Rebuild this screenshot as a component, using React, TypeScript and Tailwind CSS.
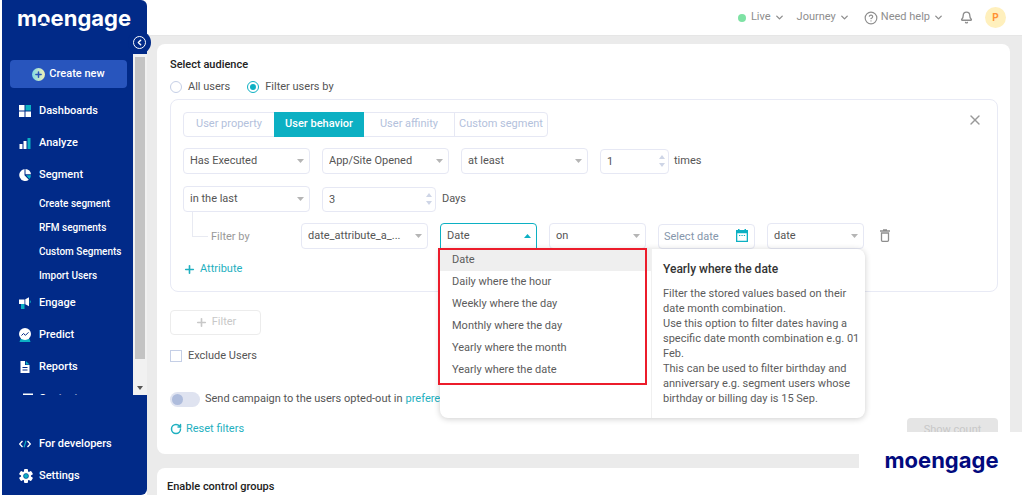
import { Bell, ChevronDown, ChevronLeft, CircleHelp, Plus, RotateCw, X } from 'lucide-react';
import clsx from 'clsx';
import type { ReactNode } from 'react';

const subItems = ['Create segment', 'RFM segments', 'Custom Segments', 'Import Users'];

const dateOptions = [
  'Date',
  'Daily where the hour',
  'Weekly where the day',
  'Monthly where the day',
  'Yearly where the month',
  'Yearly where the date',
];

const tabs = ['User property', 'User behavior', 'User affinity', 'Custom segment'];

function Logo({ className, gapClass }: { className: string; gapClass: string }) {
  return (
    <span className={clsx('flex font-[Inter,sans-serif] text-[22px] leading-7 font-bold', className)}>
      <span>m</span>
      <span className="relative">
        o
        <svg className={clsx('absolute inset-0 size-full', gapClass)} viewBox="0 0 14 28" aria-hidden="true">
          <path d="M.5 20.500l4.500-2M13.500 20.500l-4.500-2" stroke="currentColor" strokeWidth="1.800" />
        </svg>
      </span>
      <span>engage</span>
    </span>
  );
}

function DashboardIcon() {
  return (
    <svg viewBox="0 0 12 12" className="size-3" aria-hidden="true">
      <path d="M0 0h5.500v5.500H0zM0 6.500h5.500V12H0zM6.500 6.500H12V12H6.500z" fill="#fff" />
      <path d="M6.500 0H12v5.500H6.500z" fill="#0cb0c3" />
    </svg>
  );
}

function AnalyzeIcon() {
  return (
    <svg viewBox="0 0 12 12" className="size-3" aria-hidden="true">
      <path d="M.5 7h3v5h-3zM4.500 4h3v8h-3z" fill="#fff" />
      <path d="M8.500 1h3v11h-3z" fill="#0cb0c3" />
    </svg>
  );
}

function SegmentIcon() {
  return (
    <svg viewBox="0 0 12 12" className="size-3" aria-hidden="true">
      <path d="M5.500 0v6.300l4.300 4.500A6 6 0 1 1 5.500 0z" fill="#fff" />
      <path d="M6.500 0A5.600 5.600 0 0 1 12 5.300H6.500z" fill="#fff" />
      <path d="M7 6.300h5a5.500 5.500 0 0 1-1.600 3.600z" fill="#0cb0c3" />
    </svg>
  );
}

function EngageIcon() {
  return (
    <svg viewBox="0 0 12 12" className="size-3" aria-hidden="true">
      <path d="M0 2.500h5.500v4.500H0z" fill="#fff" />
      <path d="M6.300 2.300L10 .3v9L6.300 7.200z" fill="#fff" />
      <path d="M2 7h3.500v5H2zM10.700 3a2 2 0 0 1 0 3.600z" fill="#0cb0c3" />
    </svg>
  );
}

function PredictIcon() {
  return (
    <svg viewBox="0 0 12 14" className="h-3.5 w-3" aria-hidden="true">
      <path d="M1.500 11h9l1 3H.5z" fill="#0cb0c3" />
      <circle cx="6" cy="6" r="6" fill="#fff" />
      <path d="M2.500 7.500l2-2 2 1.800 3-3" fill="none" stroke="#012a88" strokeWidth="1" />
    </svg>
  );
}

function ReportsIcon() {
  return (
    <svg viewBox="0 0 12 12" className="size-3" aria-hidden="true">
      <path d="M1.500 0H6v4h4.500v8h-9z" fill="#fff" />
      <path d="M6.800 0l3.700 3.400H6.800z" fill="#0cb0c3" />
      <path d="M3.500 6.500h5M3.500 9h5" stroke="#012a88" strokeWidth="1" />
    </svg>
  );
}

function ContentIcon() {
  return (
    <svg viewBox="0 0 14 12" className="h-3 w-3.5" aria-hidden="true">
      <path d="M4 .5h10v9H4z" fill="#fff" />
      <path d="M6 2.500h6v4H6z" fill="#0cb0c3" />
      <path d="M1 3h1.500v9H1z" fill="#fff" />
    </svg>
  );
}

function CodeIcon() {
  return (
    <svg viewBox="0 0 12 12" className="size-3" fill="none" aria-hidden="true">
      <path d="M3.500 3L.7 6l2.800 3M8.500 3l2.800 3-2.800 3" stroke="#fff" strokeWidth="1.300" />
      <path d="M7 2.800L5 9.200" stroke="#0cb0c3" strokeWidth="1.200" />
    </svg>
  );
}

function SettingsIcon() {
  return (
    <svg viewBox="0 0 14 14" className="size-3.5" aria-hidden="true">
      <g fill="#fff">
        <circle cx="7" cy="7" r="5" />
        <rect x="5" y="0" width="4" height="14" rx="1" />
        <rect x="5" y="0" width="4" height="14" rx="1" transform="rotate(60 7 7)" />
        <rect x="5" y="0" width="4" height="14" rx="1" transform="rotate(120 7 7)" />
      </g>
      <circle cx="7" cy="7" r="2.500" fill="#0cb0c3" stroke="#012a88" strokeWidth=".6" />
    </svg>
  );
}

function NavItem({ icon, label }: { icon: ReactNode; label: string }) {
  return (
    <a href="#" className="flex h-8 shrink-0 items-center text-[11px] font-medium">
      <span className="ml-[17px] flex w-5 items-center">{icon}</span>
      {label}
    </a>
  );
}

function Sidebar() {
  return (
    <aside className="relative flex w-[145px] shrink-0 flex-col rounded-r-md bg-[#012a88] text-white">
      <div className="h-[54px] shrink-0 pt-1 pl-[15px]">
        <Logo className="text-white" gapClass="text-[#012a88]" />
      </div>
      <button
        aria-label="Collapse menu"
        className="absolute top-[31px] -right-1 z-10 flex size-[23px] items-center justify-center rounded-full bg-[#012a88]"
      >
        <span className="flex size-[13px] items-center justify-center rounded-full border border-white">
          <ChevronLeft size={9} strokeWidth={4} />
        </span>
      </button>
      <div className="flex min-h-0 flex-1">
        <nav className="flex flex-1 flex-col overflow-hidden pt-1.5">
          <button className="mx-2 mb-[7px] flex h-7 w-[117px] shrink-0 items-center justify-center gap-1 rounded-sm bg-[#2855bd] text-[11px] font-medium">
            <span className="flex size-[13px] items-center justify-center rounded-full bg-linear-to-r from-[#7edbe3] to-[#f1efb4] text-[#2855bd]">
              <Plus size={9} strokeWidth={4} />
            </span>
            Create new
          </button>
          <NavItem icon={<DashboardIcon />} label="Dashboards" />
          <NavItem icon={<AnalyzeIcon />} label="Analyze" />
          <NavItem icon={<SegmentIcon />} label="Segment" />
          {subItems.map((item) => (
            <a key={item} href="#" className="flex h-6 shrink-0 items-center pl-[37px] text-[10px] font-medium">
              {item}
            </a>
          ))}
          <NavItem icon={<EngageIcon />} label="Engage" />
          <NavItem icon={<PredictIcon />} label="Predict" />
          <NavItem icon={<ReportsIcon />} label="Reports" />
          <NavItem icon={<ContentIcon />} label="Content" />
        </nav>
        <div className="flex w-3.5 shrink-0 flex-col items-center justify-between bg-[#f1f1f1] pt-[3px] pb-[5px]">
          <div className="h-[302px] w-2.5 bg-[#c3c3c3]" />
          <Caret className="w-1.5 text-[#555]" />
        </div>
      </div>
      <div className="h-[100px] shrink-0 pt-[33px]">
        <NavItem icon={<CodeIcon />} label="For developers" />
        <NavItem icon={<SettingsIcon />} label="Settings" />
      </div>
    </aside>
  );
}

function Header() {
  return (
    <header className="flex h-9 shrink-0 items-center justify-end border-b border-[#e6e6e6] bg-white pr-4 text-[11px] text-[#8e8e8e]">
      <button className="mr-3 flex items-center gap-[3px]">
        <span className="mr-0.5 size-2 rounded-full bg-[#7ee2a4]" />
        Live
        <ChevronDown size={11} strokeWidth={3} />
      </button>
      <button className="mr-3.5 flex items-center gap-[3px]">
        Journey
        <ChevronDown size={11} strokeWidth={3} />
      </button>
      <button className="mr-4 flex items-center gap-[3px]">
        <CircleHelp size={14} />
        Need help
        <ChevronDown size={11} strokeWidth={3} />
      </button>
      <button aria-label="Notifications" className="mr-3">
        <Bell size={13} strokeWidth={2.5} />
      </button>
      <button className="flex size-[21px] items-center justify-center rounded-full bg-[#fff0bd] text-[10px] font-bold text-[#ff9234]">
        P
      </button>
    </header>
  );
}

function Caret({ up, className }: { up?: boolean; className: string }) {
  return (
    <svg viewBox="0 0 8 4" className={clsx('h-1', className)} preserveAspectRatio="none" aria-hidden="true">
      <path d={up ? 'M0 4l4-4 4 4z' : 'M0 0h8L4 4z'} fill="currentColor" />
    </svg>
  );
}

function Select({ label, value, width, open }: { label: string; value: string; width: string; open?: boolean }) {
  return (
    <div className={clsx('relative', width)}>
      <select
        aria-label={label}
        className={clsx(
          'h-[26px] w-full appearance-none rounded-sm border bg-white pr-5 pl-1.5 text-[11px] text-[#555]',
          open ? 'rounded-b-none border-[#0cb0c3]' : 'border-[#e6e8f4]',
        )}
      >
        <option>{value}</option>
      </select>
      <Caret
        up={open}
        className={clsx('pointer-events-none absolute top-[11px] right-1.5 w-[7px]', open ? 'text-[#0cb0c3]' : 'text-[#b5b5b5]')}
      />
    </div>
  );
}

function NumberInput({ label, value, width }: { label: string; value: string; width: string }) {
  return (
    <div className={clsx('relative', width)}>
      <input
        aria-label={label}
        defaultValue={value}
        className="h-[25px] w-full rounded-sm border border-[#e6e8f4] bg-white pl-1.5 text-[11px] text-[#555]"
      />
      <div className="pointer-events-none absolute inset-y-0 right-1 flex flex-col justify-center gap-1 text-[#ced5e6]">
        <Caret up className="w-1.5" />
        <Caret className="w-1.5" />
      </div>
    </div>
  );
}

function DateMenu() {
  return (
    <div className="absolute top-full left-0 z-20 flex h-[169px] w-[425px] rounded-b-lg rounded-tr-lg bg-white text-[11px] text-[#5c5c5c] shadow-[0_1px_6px_rgba(0,0,0,0.2)]">
      <ul className="w-[212px] border-r border-[#f0f0f0]">
        {dateOptions.map((option, i) => (
          <li key={option} className={clsx('flex h-[22px] items-center pl-3', i === 0 && 'bg-[#efefef]')}>
            {option}
          </li>
        ))}
      </ul>
      <div className="flex-1 pt-3 pl-[11px]">
        <h3 className="mb-[9px] text-xs leading-4 font-medium text-[#333]">Yearly where the date</h3>
        <p className="w-[200px] leading-[15px]">
          Filter the stored values based on their date month combination.
          <br />
          Use this option to filter dates having a specific date month combination e.g. 01 Feb.
          <br />
          This can be used to filter birthday and anniversary e.g. segment users whose birthday or billing day is 15 Sep.
        </p>
      </div>
      <div className="pointer-events-none absolute -top-px -left-0.5 h-[137px] w-[209px] border-2 border-[#ec1c2b]" />
    </div>
  );
}

function FilterBox() {
  return (
    <div className="mt-1 rounded-lg border border-[#e8eaf5] px-3 pt-3 pb-3.5">
      <div className="flex items-start justify-between">
        <div className="flex h-[25px] rounded-sm border border-[#e6e8f4] text-[11px] text-[#b3c1dc]">
          {tabs.map((tab, i) => (
            <button
              key={tab}
              className={clsx(
                'px-1',
                i === 3 ? 'w-[93px] border-l border-[#e6e8f4]' : 'w-[90px]',
                i === 1 && '-my-px bg-[#0cb0c3] font-medium text-white',
              )}
            >
              {tab}
            </button>
          ))}
        </div>
        <button aria-label="Remove filter" className="mr-0.5 text-[#999]">
          <X size={16} strokeWidth={2} />
        </button>
      </div>
      <div className="mt-[11px] flex items-center gap-3">
        <Select label="Execution" value="Has Executed" width="w-[127px]" />
        <Select label="Event" value="App/Site Opened" width="w-[127px]" />
        <Select label="Comparison" value="at least" width="w-[127px]" />
        <label className="flex items-center gap-[5px]">
          <NumberInput label="Count" value="1" width="w-[69px]" />
          times
        </label>
      </div>
      <div className="mt-3 flex items-center gap-3">
        <Select label="Period" value="in the last" width="w-[127px]" />
        <label className="flex items-center gap-1.5">
          <NumberInput label="Days" value="3" width="w-[114px]" />
          Days
        </label>
      </div>
      <div className="flex items-end gap-3">
        <div className="flex w-[106px] pl-[9px]">
          <span className="mr-[3px] mb-3 h-[25px] w-4 border-b border-l border-[#e8eaf2]" />
          <span className="mt-[17px] text-[#999]">Filter by</span>
        </div>
        <Select label="Attribute" value="date_attribute_a_..." width="w-[127px]" />
        <div className="relative">
          <Select label="Date type" value="Date" width="w-[97px]" open />
          <DateMenu />
        </div>
        <Select label="Operator" value="on" width="w-[97px]" />
        <div className="relative w-[97px]">
          <input
            aria-label="Select date"
            placeholder="Select date"
            className="h-[25px] w-full rounded-sm border border-[#e6e8f4] pl-[5px] text-[11px] placeholder:text-[#8596ab]"
          />
          <svg viewBox="0 0 12 13" className="pointer-events-none absolute top-[5px] right-[7px] h-[13px] w-3" aria-hidden="true">
            <path d="M2 0h1.500v1h5V0H10v1h2v12H0V1h2zM1.300 4.300v7.400h9.400V4.300z" fill="#0cb0c3" fillRule="evenodd" />
            <path d="M3 6.500h1.300M5.400 6.500h1.300M7.800 6.500h1.300" stroke="#0cb0c3" strokeWidth="1.200" />
          </svg>
        </div>
        <Select label="Value type" value="date" width="w-[97px]" />
        <button aria-label="Delete" className="mb-[7px] ml-1 text-[#8e8e8e]">
          <svg viewBox="0 0 10 13" className="h-[13px] w-2.5" fill="none" stroke="currentColor" strokeWidth="1.300" aria-hidden="true">
            <path d="M0 2h10M3 1h4M1.500 4v7.300q0 1 1 1h5q1 0 1-1V4z" />
          </svg>
        </button>
      </div>
      <button className="mt-3 flex h-4 items-center gap-1 text-[#1fb0c0]">
        <Plus size={13} strokeWidth={3} />
        Attribute
      </button>
    </div>
  );
}

export default function App() {
  return (
    <div className="relative flex h-screen overflow-hidden bg-white px-0.5 font-[Roboto,sans-serif] text-[11px] text-[#555]">
      <Sidebar />
      <div className="flex min-w-0 flex-1 flex-col">
        <Header />
        <main className="flex-1 overflow-hidden bg-[#ebebeb] pt-2 pr-3 pl-2.5">
          <section className="rounded-lg bg-white pt-[13px] pr-3 pb-4 pl-[13px]">
            <h2 className="leading-4 font-medium text-[#222]">Select audience</h2>
            <div className="mt-1.5 flex h-4 items-center gap-[17px]">
              <label className="flex items-center gap-1.5">
                <input
                  type="radio"
                  name="audience"
                  className="size-3 appearance-none rounded-full border border-[#c5cfe6]"
                />
                All users
              </label>
              <label className="flex items-center gap-1.5">
                <input
                  type="radio"
                  name="audience"
                  defaultChecked
                  className="size-3 appearance-none rounded-full border border-[#0cb0c3] bg-[#0cb0c3] bg-clip-content p-0.5"
                />
                Filter users by
              </label>
            </div>
            <FilterBox />
            <button
              disabled
              className="mt-[18px] flex h-[25px] w-[91px] items-center justify-center gap-1 rounded-sm border border-[#ececec] text-[#c8c8c8]"
            >
              <Plus size={13} strokeWidth={3} />
              Filter
            </button>
            <label className="mt-[13px] flex h-4 items-center gap-1.5">
              <input type="checkbox" className="size-3 appearance-none border border-[#c5cfe6]" />
              Exclude Users
            </label>
            <div className="mt-[27px] flex h-4 items-center">
              <label className="flex items-center gap-[5px]">
                <input
                  type="checkbox"
                  role="switch"
                  className="relative h-[15px] w-[30px] appearance-none rounded-full bg-[#dfe3f0] before:absolute before:top-[2px] before:left-[2px] before:size-[11px] before:rounded-full before:bg-[#aebcdc]"
                />
                Send campaign to the users opted-out in
              </label>
              <a href="#" className="ml-[3px] text-[#1fb0c0]">
                preference
              </a>
            </div>
            <div className="mt-3.5 flex h-[17px] items-start justify-between">
              <button className="flex h-4 items-center gap-1 text-[#1fb0c0]">
                <RotateCw size={12} strokeWidth={3} />
                Reset filters
              </button>
              <button disabled className="-mt-[3px] h-6 w-[91px] rounded-sm bg-[#e5e5e5] text-[#c8c8c8]">
                Show count
              </button>
            </div>
          </section>
          <section className="mt-3.5 rounded-t-lg bg-white px-2.5 pt-[11px] pb-8">
            <h2 className="leading-4 font-medium text-[#222]">Enable control groups</h2>
          </section>
        </main>
      </div>
      <div className="absolute right-0 bottom-0 flex h-[63px] w-[165px] justify-center bg-white pt-3.5">
        <Logo className="text-[#020a7e]" gapClass="text-white" />
      </div>
    </div>
  );
}
